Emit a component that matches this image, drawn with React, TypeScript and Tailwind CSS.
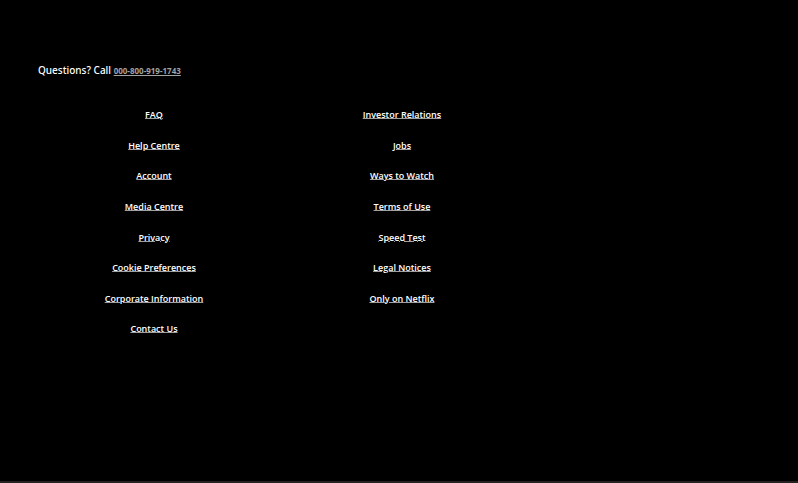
const columns: string[][] = [
  [
    'FAQ',
    'Help Centre',
    'Account',
    'Media Centre',
    'Privacy',
    'Cookie Preferences',
    'Corporate Information',
    'Contact Us',
  ],
  [
    'Investor Relations',
    'Jobs',
    'Ways to Watch',
    'Terms of Use',
    'Speed Test',
    'Legal Notices',
    'Only on Netflix',
  ],
];

function LinkColumn({ links }: { links: string[] }) {
  return (
    <ul className="grid min-h-[245px] grid-rows-8 justify-items-center font-['Open_Sans',sans-serif] text-[9px] leading-[30px] font-semibold">
      {links.map((label) => (
        <li key={label}>
          <a href="#" className="underline decoration-[#a0a0a0] decoration-1 underline-offset-0">
            {label}
          </a>
        </li>
      ))}
    </ul>
  );
}

export default function App() {
  return (
    <footer className="flex min-h-screen flex-col border-b-2 border-[#232323] bg-black pt-15 pr-6 pl-[30px] font-['Noto_Sans',sans-serif] text-white">
      <p className="pl-2 text-[10px] leading-5 font-medium">
        Questions? Call{' '}
        <a
          href="tel:000-800-919-1743"
          className="text-[8px] font-bold text-[#a3a3a3] underline decoration-1 underline-offset-1"
        >
          000-800-919-1743
        </a>
      </p>
      <nav aria-label="Footer" className="mt-[19px] grid grid-cols-3">
        {columns.map((links) => (
          <LinkColumn key={links[0]} links={links} />
        ))}
      </nav>
    </footer>
  );
}
